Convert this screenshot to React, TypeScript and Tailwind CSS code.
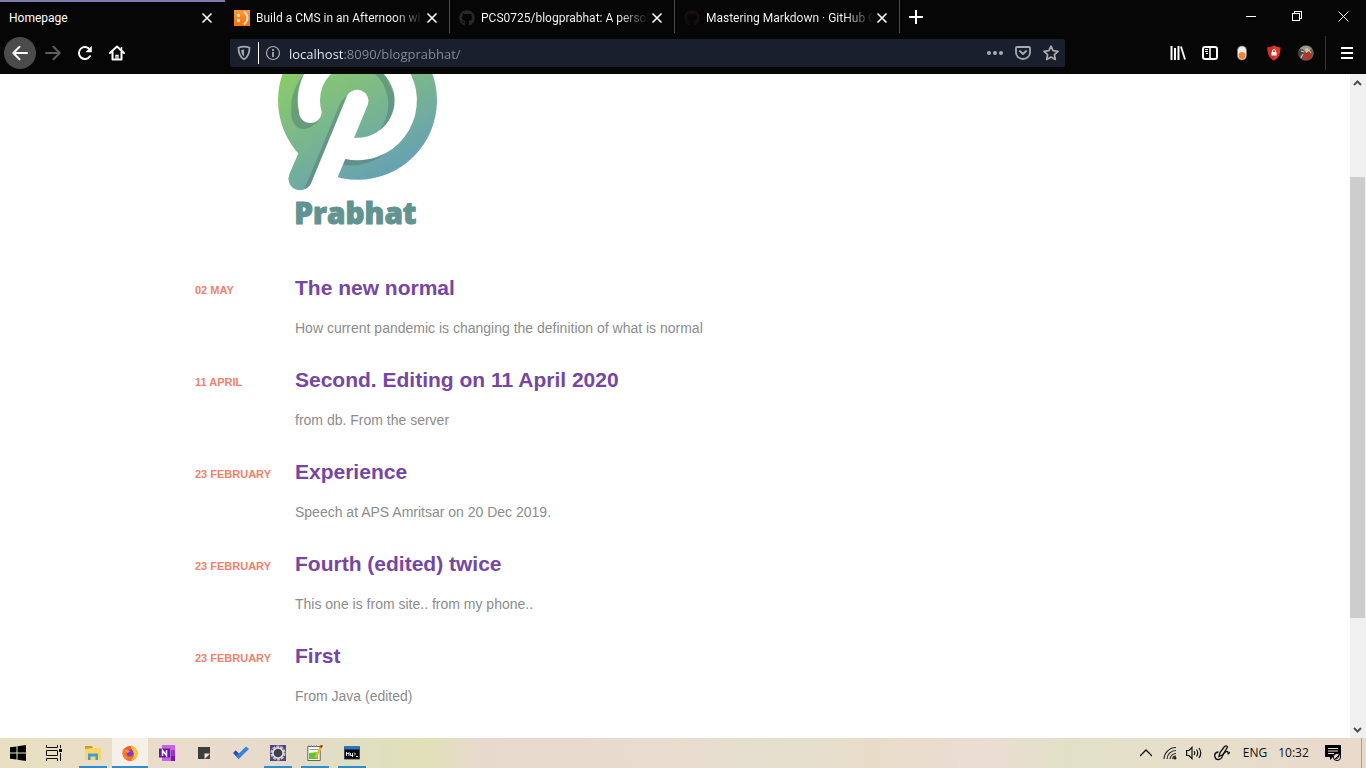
import React from "react";
import { FaGithub } from "react-icons/fa";

const posts = [
  { date: "02 May", title: "The new normal", text: "How current pandemic is changing the definition of what is normal" },
  { date: "11 April", title: "Second. Editing on 11 April 2020", text: "from db. From the server" },
  { date: "23 February", title: "Experience", text: "Speech at APS Amritsar on 20 Dec 2019." },
  { date: "23 February", title: "Fourth (edited) twice", text: "This one is from site.. from my phone.." },
  { date: "23 February", title: "First", text: "From Java (edited)" },
];

function SmileIcon() {
  return (
    <svg className="size-4" viewBox="0 0 16 16">
      <defs>
        <linearGradient id="smile" x1="0" y1="0" x2="0" y2="1">
          <stop offset="0" stopColor="#fb9a3a" />
          <stop offset="1" stopColor="#f7700f" />
        </linearGradient>
      </defs>
      <rect width="16" height="16" fill="url(#smile)" />
      <rect x="3" y="4" width="3" height="3" fill="#fde3c4" />
      <rect x="3" y="9" width="3" height="3" fill="#fde3c4" />
      <path d="M10 1.500Q17 8 10 14.500" fill="none" stroke="#fde3c4" strokeWidth="2" />
    </svg>
  );
}

const tabs = [
  { title: "Homepage", icon: null },
  { title: "Build a CMS in an Afternoon wi", icon: <SmileIcon /> },
  { title: "PCS0725/blogprabhat: A person", icon: <FaGithub className="size-4 text-[#24292e]" /> },
  { title: "Mastering Markdown · GitHub G", icon: <FaGithub className="size-4 text-[#180e10]" /> },
];

function TabStrip() {
  return (
    <div className="flex h-[33px] shrink-0">
      <div role="tablist" className="flex font-['Roboto',sans-serif]">
        {tabs.map((tab, i) => (
          <div
            key={tab.title}
            role="tab"
            aria-selected={i === 0}
            className={
              i === 0
                ? "flex w-[225px] items-center border-t-2 border-[#7c7cae] pr-[10px] pl-[9px]"
                : "flex w-[225px] items-center gap-[6px] border-r border-[#4a4a4a] pt-[2px] pr-[9px] pl-[9px]"
            }
          >
            {tab.icon && <span className="shrink-0">{tab.icon}</span>}
            <span
              className={
                i === 0
                  ? "min-w-0 flex-1 whitespace-nowrap"
                  : "w-0 flex-1 bg-[linear-gradient(to_right,#fff_82%,#060606_100%)] bg-clip-text whitespace-nowrap text-transparent"
              }
            >
              {tab.title}
            </span>
            <button aria-label={`Close ${tab.title}`} className="-ml-[6px] grid h-5 w-4 shrink-0 place-items-center">
              <svg className="size-4" viewBox="0 0 16 16" stroke="#fff" strokeWidth="1.600">
                <path d="M3.500 3.500l9 9M12.500 3.500l-9 9" />
              </svg>
            </button>
          </div>
        ))}
      </div>
      <button aria-label="New tab" className="grid w-8 place-items-center">
        <svg className="size-4" viewBox="0 0 16 16" stroke="#fff" strokeWidth="2">
          <path d="M8 1v14M1 8h14" />
        </svg>
      </button>
      <div className="ml-auto flex">
        <button aria-label="Minimize" className="grid w-[46px] place-items-center">
          <svg className="size-[11px]" viewBox="0 0 11 11" stroke="#fff" shapeRendering="crispEdges">
            <path d="M0 5.500h10" />
          </svg>
        </button>
        <button aria-label="Restore" className="grid w-[46px] place-items-center">
          <svg className="size-[11px]" viewBox="0 0 11 11" stroke="#fff" fill="none" shapeRendering="crispEdges">
            <path d="M.5 2.500h7v7h-7zM2.500 2.500v-2h7v7h-2" />
          </svg>
        </button>
        <button aria-label="Close window" className="grid w-[46px] place-items-center">
          <svg className="size-[11px]" viewBox="0 0 11 11" stroke="#fff">
            <path d="M.5.5l10 10M10.500.5l-10 10" />
          </svg>
        </button>
      </div>
    </div>
  );
}

function Tool({ label, children, round = false }: { label: string; children: React.ReactNode; round?: boolean }) {
  return (
    <button aria-label={label} className={round ? "grid size-8 place-items-center rounded-full bg-[#4b4b4b]" : "grid size-8 place-items-center"}>
      <svg className="size-4" viewBox="0 0 16 16" fill="none" stroke="#fbfbfb" strokeWidth="2">
        {children}
      </svg>
    </button>
  );
}

function Toolbar() {
  return (
    <div className="flex h-[41px] shrink-0 items-center pb-px pl-1">
      <div className="flex">
        <Tool label="Back" round>
          <path d="M15 8H1.500M7.500 1.800L1.300 8l6.200 6.200" strokeLinecap="round" strokeLinejoin="round" />
        </Tool>
        <div className="ml-px flex">
          <Tool label="Forward">
            <path d="M1 8h13.500M8.500 1.800L14.700 8l-6.200 6.200" stroke="#5d5d5d" strokeLinecap="round" strokeLinejoin="round" />
          </Tool>
          <Tool label="Reload">
            <path d="M13 11.200A6 6 0 1 1 12.800 4.500" strokeLinecap="round" />
            <path d="M14.800 .8v6.400H8.500z" fill="#fbfbfb" stroke="none" />
          </Tool>
          <Tool label="Home">
            <path d="M1 8l7-6.500L15 8M3.500 7v7.500h9V7" strokeLinecap="round" strokeLinejoin="round" />
            <path d="M7 14.500v-4h2v4" strokeWidth="1.300" />
            <path d="M12.500 2v3" strokeWidth="1.500" />
          </Tool>
        </div>
      </div>
      <div className="mx-[97px] flex h-7 flex-1 items-center rounded-[2px] bg-[#1a1f2d]">
        <button aria-label="Tracking protection" className="grid w-7 place-items-center">
          <svg className="size-4" viewBox="0 0 16 16" fill="none" stroke="#a9abb0" strokeWidth="1.700">
            <path d="M8 1.700c-2 0-4 .4-5.500 1 0 5 .8 9 5.500 11.600 4.700-2.600 5.500-6.600 5.500-11.600-1.500-.6-3.500-1-5.500-1z" />
            <path d="M8 4.500v7C6 10 5.300 7.800 5.200 5 6 4.700 7 4.500 8 4.500z" fill="#a9abb0" stroke="none" />
          </svg>
        </button>
        <span className="h-[22px] w-px bg-white" />
        <button aria-label="Site information" className="grid w-7 place-items-center">
          <svg className="size-4" viewBox="0 0 16 16" fill="none" stroke="#a9abb0">
            <circle cx="8" cy="8" r="6.500" strokeWidth="1.200" />
            <path d="M8 7v5M8 4v2" strokeWidth="1.800" />
          </svg>
        </button>
        <input
          aria-label="Address"
          defaultValue="localhost:8090/blogprabhat/"
          className="ml-[2px] h-6 min-w-0 flex-1 bg-[linear-gradient(to_right,#f5f5f7_55px,#8b8d93_55px)] bg-clip-text pt-px text-[13px] text-transparent outline-none"
        />
        <div className="flex">
          <button aria-label="Page actions" className="grid w-7 place-items-center">
            <svg className="size-4" viewBox="0 0 16 16" fill="#a9abb0">
              <circle cx="2" cy="8" r="2" />
              <circle cx="8" cy="8" r="2" />
              <circle cx="14" cy="8" r="2" />
            </svg>
          </button>
          <button aria-label="Save to Pocket" className="grid w-7 place-items-center">
            <svg className="size-4" viewBox="0 0 16 16" fill="none" stroke="#a9abb0" strokeWidth="1.800" strokeLinecap="round" strokeLinejoin="round">
              <path d="M2 2h12a1 1 0 0 1 1 1v4.500a7 6.500 0 0 1-14 0V3a1 1 0 0 1 1-1z" />
              <path d="M4.800 6L8 9l3.200-3" />
            </svg>
          </button>
          <button aria-label="Bookmark this page" className="grid w-7 place-items-center">
            <svg className="size-4" viewBox="0 0 16 16" fill="none" stroke="#a9abb0" strokeWidth="1.700" strokeLinejoin="round">
              <path d="M8 1.200l2.100 4.500 4.900.6-3.600 3.300.9 4.900L8 12.100l-4.300 2.400.9-4.900L1 6.300l4.900-.6z" />
            </svg>
          </button>
        </div>
      </div>
      <div className="flex items-center">
        <Tool label="Library">
          <path d="M1.500 1v14M5 3v12M8.500 1v14" strokeWidth="2" />
          <path d="M11 1.500L15 14.500" strokeWidth="1.800" />
        </Tool>
        <Tool label="Sidebars">
          <rect x="1" y="2" width="14" height="12" rx="2" />
          <path d="M8 2v12" strokeWidth="1.600" />
          <path d="M3 4.500h3M3 6.500h3M4 8.500h2" strokeWidth="1" />
        </Tool>
        <Tool label="Extension switch">
          <rect x="3.500" y="1" width="9" height="14" rx="4.500" fill="#eee" stroke="#777" strokeWidth=".7" />
          <circle cx="8" cy="10.500" r="3.400" fill="#f98332" stroke="none" />
        </Tool>
        <Tool label="Shield extension">
          <path d="M8 .5c2 1.200 4.500 1.800 6.500 2 0 5-.8 10-6.500 13C2.300 12.500 1.500 7.500 1.500 2.500 3.500 2.300 6 1.700 8 .5z" fill="#e0382e" stroke="none" />
          <path d="M8 .5v15C2.300 12.500 1.500 7.500 1.500 2.500 3.500 2.300 6 1.700 8 .5z" fill="#cf2d25" stroke="none" />
          <rect x="5.500" y="7" width="5" height="3.500" fill="#fff" stroke="none" />
          <path d="M6.500 7.500V6a1.500 1.500 0 0 1 3 0v1.500" strokeWidth="1" />
        </Tool>
        <Tool label="Profile">
          <circle cx="8" cy="8" r="7.800" fill="#6d5a50" stroke="none" />
          <path d="M2 3.500Q8-2 14 4L8 7z" fill="#9b9a8b" stroke="none" />
          <path d="M4 9l8-2 2 4-4 4-5-1z" fill="#b3352a" stroke="none" />
          <path d="M1 6l4-2 1 4-5 3z" fill="#3d4a3e" stroke="none" />
          <path d="M7 4l3-1 1 3-3 2z" fill="#e3bfa2" stroke="none" />
          <path d="M5 9l-2 4M11 5l2 3M3 6l3 1" stroke="#d8d2c8" strokeWidth="1" />
        </Tool>
      </div>
      <span className="ml-[3px] h-[34px] w-px bg-[#333]" />
      <button aria-label="Open menu" className="grid h-8 w-10 place-items-center pl-[2px]">
        <svg className="size-3" viewBox="0 0 12 12" stroke="#fff" strokeWidth="2">
          <path d="M0 1h12M0 6h12M0 11h12" />
        </svg>
      </button>
    </div>
  );
}

function Logo() {
  return (
    <svg className="ml-[65px] block h-[166px] w-[200px]" viewBox="0 12 600 498" role="img" aria-label="Prabhat">
      <defs>
        <linearGradient id="leaf" gradientUnits="userSpaceOnUse" x1="160" y1="-40" x2="350" y2="320">
          <stop offset="0" stopColor="#8ccc68" />
          <stop offset="1" stopColor="#67a2b2" />
        </linearGradient>
        <linearGradient id="shade" gradientUnits="userSpaceOnUse" x1="160" y1="-40" x2="350" y2="320">
          <stop offset="0" stopColor="#70a56c" />
          <stop offset="1" stopColor="#5d8c92" />
        </linearGradient>
      </defs>
      <circle cx="292.500" cy="91" r="238.500" fill="url(#leaf)" />
      <path d="M132 12C110 40 94 75 94 105V130C94 160 110 177 131 177C152 177 160 162 172 158L185 125L170 60Z" fill="url(#shade)" />
      <path d="M132 12A179 179 0 0 0 113 91Q113 108 117 125A34 34 0 0 0 185 125Q180 108 180 91A112 112 0 0 1 213 12Z" fill="#fff" />
      <path d="M345 12Q384 48 385 105Q383 148 358 182L385 162L410 91L375 12Z" fill="url(#shade)" />
      <path d="M256 267L248 284Q320 296 382 246Z" fill="url(#shade)" />
      <path d="M371 12A112 112 0 0 1 284 203L262 200L240 264L256 267A179 179 0 0 0 452 12Z" fill="#fff" />
      <path d="M115 250L88 313A34 34 0 0 0 152 339L261 78L200 150Z" fill="url(#leaf)" />
      <path d="M265 76Q247 84 238 106L133 357Q147 353 155 338Z" fill="url(#shade)" />
      <path d="M261 78A34 34 0 0 1 324 103L233 322L215 360H146L154 338Z" fill="#fff" />
      <text x="103" y="463" fontFamily="'Open Sans', sans-serif" fontWeight="800" fontSize="89" fill="#619390" stroke="#619390" strokeWidth="3" strokeLinejoin="round">
        Prabhat
      </text>
    </svg>
  );
}

function Page() {
  return (
    <main className="flex min-h-0 flex-1 bg-white font-['Liberation_Sans',Arial,sans-serif]">
      <div className="min-w-0 flex-1 overflow-hidden">
        <div className="mx-auto max-w-[960px]">
          <Logo />
          <div className="mt-8 flex flex-col gap-6">
            {posts.map((post) => (
              <article key={post.title} className="flex">
                <time className="w-[100px] shrink-0 pt-[10px] text-[11px] leading-4 font-bold text-[#f0826a] uppercase">{post.date}</time>
                <div className="pb-[2px]">
                  <h2 className="text-[21px] leading-8 font-bold text-[#7546a3]">
                    <a href="#post">{post.title}</a>
                  </h2>
                  <p className="mt-[14px] text-sm leading-5 text-[#8c8c8c]">{post.text}</p>
                </div>
              </article>
            ))}
          </div>
        </div>
      </div>
      <div aria-hidden="true" className="flex w-4 shrink-0 flex-col items-center bg-[#f0f0f0]">
        <svg className="h-[17px] w-4" viewBox="0 0 16 17" fill="none" stroke="#505050" strokeWidth="2">
          <path d="M4 11l3.500-3.500L11 11" />
        </svg>
        <div className="flex w-full flex-1 flex-col pr-px">
          <div className="grow-[86]" />
          <div className="grow-[441] bg-[#cdcdcd]" />
          <div className="grow-[103]" />
        </div>
        <svg className="h-[17px] w-4" viewBox="0 0 16 17" fill="none" stroke="#505050" strokeWidth="2">
          <path d="M4 7l3.500 3.500L11 7" />
        </svg>
      </div>
    </main>
  );
}

const apps = [
  {
    name: "File Explorer",
    state: "running",
    icon: (
      <>
        <path d="M0 1h6.500l1.500 1.500V5H0z" fill="#d99a1c" />
        <path d="M0 4l7-1h9v12H0z" fill="#fbd568" />
        <path d="M3 15V8.500h10V15h-2.500v-3.500h-5V15z" fill="#3f9bdc" />
      </>
    ),
  },
  {
    name: "Firefox",
    state: "active",
    icon: (
      <>
        <circle cx="8" cy="8.500" r="7.500" fill="#f9563a" />
        <path d="M9 0c4 2 7 5 6.500 9-.5 4-4 6.500-7.500 6.500C12 13 13 9 11 6 10 4 8.500 3 9 0z" fill="#fdc832" />
        <path d="M1 4c1 1 2 0 4 0l2 2-3 3c1 4 5 4 7 2-1 4-8 5-10 0-.5-3-.5-5 0-7z" fill="#fb7b26" />
        <circle cx="8" cy="8" r="3.300" fill="#7a3fd1" />
        <path d="M3 5.500c2-1 4 0 5 1L5.500 8z" fill="#fb9a2b" />
      </>
    ),
  },
  {
    name: "OneNote",
    state: "",
    icon: (
      <>
        <path d="M3 0h13v16H3z" fill="#c763ea" />
        <path d="M12 5h4v6h-4z" fill="#9b36c4" />
        <path d="M12 11h4v5h-4z" fill="#7719aa" />
        <path d="M0 3.500h11v9H0z" fill="#6a16a3" />
        <path d="M3.500 11V5.500l4 5V5" fill="none" stroke="#fff" strokeWidth="1.500" />
      </>
    ),
  },
  {
    name: "Sticky Notes",
    state: "",
    icon: (
      <>
        <path d="M2 2h12v7l-5 5H2z" fill="#3d3d3d" />
        <path d="M8.500 8.500H14L8.500 14z" fill="#f1e8df" />
        <path d="M14 9v5H9z" fill="#4a4a4a" />
      </>
    ),
  },
  {
    name: "To Do",
    state: "",
    icon: (
      <>
        <path d="M0 8l2.700-2.700L8.300 11l-2.700 3z" fill="#1c55b0" />
        <path d="M5.600 14L2.900 11.200 13 1.500l3 2.600z" fill="#3585e0" />
      </>
    ),
  },
  {
    name: "Eclipse",
    state: "running",
    icon: (
      <>
        <rect width="16" height="16" fill="#54467c" />
        <circle cx="8" cy="8" r="6.300" fill="none" stroke="#c4c4cc" strokeWidth="2.400" strokeDasharray="2.800 1.100" />
        <circle cx="8" cy="8" r="5.800" fill="#e6e6e6" />
        <circle cx="8" cy="8" r="4.300" fill="#40404a" />
      </>
    ),
  },
  {
    name: "Notepad++",
    state: "running",
    icon: (
      <>
        <path d="M.8 1.500h12.400V15.500H.8z" fill="#fafaf6" stroke="#555" strokeWidth=".9" />
        <path d="M2 8l9-1v7H2z" fill="#62c42c" />
        <path d="M2.500 4.500h9M2 0v2M4.500 0v2M7 0v2M9.500 0v2" stroke="#888" strokeWidth=".8" />
        <path d="M8.500 12.500l5.200-10" stroke="#eab526" strokeWidth="2.400" />
        <path d="M13.700 2.500L15 .2" stroke="#b52c24" strokeWidth="2.400" />
      </>
    ),
  },
  {
    name: "MySQL Client",
    state: "running",
    icon: (
      <>
        <path d="M0 2h16v12H0z" fill="#050505" />
        <path d="M0 1.500h16v3H0z" fill="#2674c8" />
        <path d="M.4 1.500h15.200v12.700H.4z" fill="none" stroke="#47617c" strokeWidth=".8" />
        <path d="M2.500 11V7M5 11V7M2.500 8.500H5M6.500 8v2.500h2M8.500 8v4M10 7.500l1.500 1.500L10 10.500M12 11.500h2" fill="none" stroke="#fff" strokeWidth=".9" />
      </>
    ),
  },
];

function Taskbar() {
  return (
    <footer className="flex h-[30px] shrink-0 bg-[linear-gradient(to_right,#e8e0c0_0%,#e9dcc9_10%,#e7dbcc_20%,#e0dfc1_26%,#e1e0b8_31%,#e7dacd_35%,#e8dccf_50%,#e5dfce_57%,#e8dcc9_64%,#ebddd3_72%,#e1e0c6_78%,#e6dfcb_86%,#e9d9cb_100%)] text-[#111]">
      <button aria-label="Start" className="grid w-9 place-items-center">
        <svg className="size-4" viewBox="0 0 16 16" fill="#000">
          <path d="M0 2.300L6.500 1.400V7.500H0zM7.500 1.200L16 0v7.500H7.500zM0 8.500h6.500v6.100L0 13.700zM7.500 8.500H16V16l-8.500-1.200z" />
        </svg>
      </button>
      <button aria-label="Task View" className="mr-[3px] grid w-9 place-items-center">
        <svg className="size-4" viewBox="0 0 16 16" fill="none" stroke="#111" strokeWidth="1">
          <path d="M.5 0v2.500h11V0M.5 5.500h11v5H.5zM.5 16v-2.500h11V16M14.500 0v3M14.500 8v8" />
          <path d="M13 4h3v3h-3z" fill="#111" stroke="none" />
        </svg>
      </button>
      <nav aria-label="Apps" className="flex gap-px">
        {apps.map((app) => (
          <button
            key={app.name}
            aria-label={app.name}
            className={
              app.state === "active"
                ? "grid w-9 grid-rows-[1fr_2px] justify-items-center bg-[#f6f0e9]"
                : "grid w-9 grid-rows-[1fr_2px] justify-items-center"
            }
          >
            <svg className="mt-[7px] size-4" viewBox="0 0 16 16">
              {app.icon}
            </svg>
            <span
              className={
                app.state === "active" ? "h-[2px] w-9 bg-[#2f8ccf]" : app.state === "running" ? "h-[2px] w-7 bg-[#2f8ccf]" : "h-[2px] w-7"
              }
            />
          </button>
        ))}
      </nav>
      <div className="ml-auto flex items-center">
        <button aria-label="Show hidden icons" className="grid w-6 place-items-center">
          <svg className="size-3" viewBox="0 0 12 12" fill="none" stroke="#111" strokeWidth="1.300">
            <path d="M0 9l6-6 6 6" />
          </svg>
        </button>
        <button aria-label="Wi-Fi" className="grid w-6 place-items-center">
          <svg className="size-[14px]" viewBox="0 0 14 14" fill="none" stroke="#222" strokeWidth="1.100">
            <path d="M1 13A12 12 0 0 1 13 1.500M4 13A9 9 0 0 1 13 4.500M7 13A6 6 0 0 1 13 7.500M9.500 13A3.500 3.500 0 0 1 13 10" />
            <circle cx="12" cy="12" r="1.500" fill="#222" stroke="none" />
          </svg>
        </button>
        <button aria-label="Volume" className="grid w-6 place-items-center">
          <svg className="h-[14px] w-4" viewBox="0 0 16 14" fill="none" stroke="#111" strokeWidth="1.200">
            <path d="M.6 4.500H3L6 1.500v11L3 9.500H.6zM8 5q1.500 2 0 4M10.500 3.500q2.500 3.500 0 7M13 2q3.500 5 0 10" />
          </svg>
        </button>
        <button aria-label="Pen workspace" className="grid w-8 place-items-center">
          <svg className="size-4" viewBox="0 0 16 16" fill="none" stroke="#111" strokeWidth="1.300" strokeLinecap="round">
            <path d="M5 11.500l1-4L10.500 1.500q2-1.500 3 .5L9 9.500z" />
            <path d="M4 7Q0 8 .8 11.500t4 3q3-.5 3.400-3T12 6.500q2-.5 2 1.500t1.500-.5" />
          </svg>
        </button>
        <span className="w-[34px] text-center font-['Open_Sans',sans-serif] text-xs">ENG</span>
        <time className="w-[43px] text-center font-['Open_Sans',sans-serif] text-xs">10:32</time>
        <button aria-label="Notifications" className="grid w-9 place-items-center">
          <svg className="size-4" viewBox="0 0 16 16">
            <path d="M0 0h16v12H8l-3 3v-3H0z" fill="#000" />
            <path d="M3 3.500h10M3 6h10M3 8.500h6" stroke="#e8dccd" />
            <circle cx="12" cy="12" r="3.600" fill="#e8dccd" stroke="#000" />
            <path d="M9.500 14.500l5-5M11 14q3-1 3-4" stroke="#000" fill="none" />
          </svg>
        </button>
        <span className="mr-1 ml-[10px] h-[30px] w-px bg-[#a89f97]" />
      </div>
    </footer>
  );
}

export default function App() {
  return (
    <div className="flex h-screen flex-col overflow-hidden">
      <header className="bg-[#060606] font-['Open_Sans',sans-serif] text-xs text-white">
        <TabStrip />
        <Toolbar />
      </header>
      <Page />
      <Taskbar />
    </div>
  );
}
